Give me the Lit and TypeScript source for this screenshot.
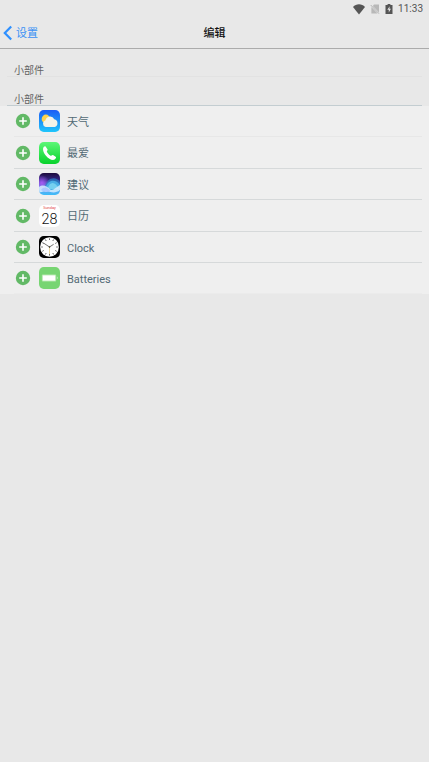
import { LitElement, html, css, svg, TemplateResult } from "lit";
import { customElement } from "lit/decorators.js";

interface Widget {
  name: string;
  icon: TemplateResult;
}

const ticks = Array.from({ length: 12 }, (_, i) => i * 30);

const weather = html`<svg class="art" viewBox="0 0 22 22" preserveAspectRatio="none" aria-hidden="true">
  <defs><linearGradient id="sky" x1="0" y1="0" x2="0" y2="1">
    <stop offset="0" stop-color="#1b5cf5" /><stop offset="1" stop-color="#1fc6fb" />
  </linearGradient></defs>
  <rect width="22" height="22" rx="5" fill="url(#sky)" />
  <circle cx="7.2" cy="9" r="4.4" fill="#ffd34d" />
  <path d="M7 17a3.5 3.5 0 0 1-.2-6.8 4.9 4.9 0 0 1 9.2-1 4 4 0 0 1 .4 7.8z" fill="#f4f3e8" />
</svg>`;

const phone = html`<svg class="art" viewBox="0 0 22 22" preserveAspectRatio="none" aria-hidden="true">
  <defs><linearGradient id="call" x1="0" y1="0" x2="0" y2="1">
    <stop offset="0" stop-color="#5cf777" /><stop offset="1" stop-color="#08d22c" />
  </linearGradient></defs>
  <rect width="22" height="22" rx="5" fill="url(#call)" />
  <path d="M4.3 6.2C4.7 4.7 6 3.9 6.9 4.4L9 7.6C9.2 8.2 8.7 8.6 8.2 9.2C8.2 10.6 11.3 13.8 12.8 13.8C13.5 13.2 14 12.7 14.7 13L17.8 15.1C18.2 16 17 17.4 15.8 17.8C10.8 18.9 3.3 11.2 4.3 6.2Z" fill="#fff" />
</svg>`;

const suggestions = html`<svg class="art" viewBox="0 0 22 22" preserveAspectRatio="none" aria-hidden="true">
  <defs>
    <linearGradient id="dusk" x1="0" y1="0" x2="0" y2="1">
      <stop offset="0" stop-color="#1d0b3c" /><stop offset=".35" stop-color="#35298c" />
      <stop offset=".65" stop-color="#6a9cf0" /><stop offset="1" stop-color="#3dbdf8" />
    </linearGradient>
    <radialGradient id="glow"><stop offset="0" stop-color="#a65cf5" /><stop offset="1" stop-color="#a65cf5" stop-opacity="0" /></radialGradient>
    <clipPath id="tile"><rect width="22" height="22" rx="5" /></clipPath>
  </defs>
  <g clip-path="url(#tile)">
    <rect width="22" height="22" fill="url(#dusk)" />
    <circle cx="3" cy="10" r="8" fill="url(#glow)" />
    <path d="M6 15C8 4 18 3 22 9V17H6z" fill="#2a86c8" opacity=".7" />
    <path d="M7 15C9 6 18 6 22 12V18H7z" fill="#4db4e8" opacity=".9" />
    <path d="M9 16C11 8 17 8 21 16z" fill="#7fd8f2" opacity=".8" />
    <path d="M0 14C4 11 8 13 11 16S18 14 22 12V17C17 21 12 19 9 18S3 20 0 19z" fill="#d6edff" opacity=".85" />
    <path d="M2 17C5 13 9 14 12 18C8 20 5 19 2 17z" fill="#a8c8ff" />
  </g>
</svg>`;

const calendar = html`<svg class="art" viewBox="0 0 22 22" preserveAspectRatio="none" aria-hidden="true">
  <rect width="22" height="22" rx="5" fill="#fff" />
  <text class="weekday" x="11" y="4" text-anchor="middle">Sunday</text>
  <text class="day" x="11" y="19" text-anchor="middle">28</text>
</svg>`;

const clock = html`<svg class="art" viewBox="0 0 22 22" preserveAspectRatio="none" aria-hidden="true">
  <rect width="22" height="22" rx="5" fill="#000" />
  <circle cx="11" cy="11" r="9.8" fill="#fff" />
  ${ticks.map((a) => svg`<path d="M11 2.4v1.5" transform="rotate(${a} 11 11)" stroke="#444" stroke-width=".9" />`)}
  <path d="M11 11L5 7.2M11 11L15 8.5" stroke="#333" stroke-width=".7" stroke-linecap="round" />
  <path d="M11 10v8" stroke="#d9b95c" stroke-width=".6" />
  <circle cx="11" cy="11" r=".8" fill="#333" />
</svg>`;

const battery = html`<svg class="art" viewBox="0 0 22 22" preserveAspectRatio="none" aria-hidden="true">
  <rect width="22" height="22" rx="5" fill="#77d572" />
  <rect x="3" y="7.4" width="15" height="7.2" rx="1" fill="#b5e8ae" />
  <rect x="4" y="8.4" width="13" height="5.2" fill="#fff" />
  <path d="M18.7 9.6c1.2.4 1.2 2.4 0 2.8z" fill="#c9efc4" />
</svg>`;

const widgets: Widget[] = [
  { name: "天气", icon: weather },
  { name: "最爱", icon: phone },
  { name: "建议", icon: suggestions },
  { name: "日历", icon: calendar },
  { name: "Clock", icon: clock },
  { name: "Batteries", icon: battery },
];

@customElement("app-root")
export class AppRoot extends LitElement {
  static styles = css`
    :host {
      display: block;
      min-height: 100vh;
      background: #e8e8e8;
      color: #636363;
      font-family: Roboto, "Noto Sans CJK SC", sans-serif;
    }
    .status {
      display: flex;
      align-items: center;
      justify-content: flex-end;
      height: 17px;
      padding: 0 6px 0 0;
      font-size: 10px;
      line-height: 17px;
      color: #555;
    }
    .status svg { display: block; height: 12px; }
    .wifi { width: 14px; margin-right: 4px; }
    .sim { width: 10px; margin-right: 4px; }
    .cell { width: 10px; margin-right: 4px; }
    .nav {
      box-sizing: border-box;
      display: grid;
      grid-template-columns: 1fr auto 1fr;
      align-items: center;
      height: 32px;
      border-bottom: 1px solid #ababab;
    }
    .back {
      display: flex;
      align-items: center;
      justify-self: start;
      gap: 3px;
      padding: 0 0 0 3px;
      border: 0;
      background: none;
      color: #3a91f5;
      font: inherit;
      font-size: 11px;
      line-height: 16px;
    }
    .back svg { display: block; width: 10px; height: 16px; }
    .back span, h1 { padding-top: 2px; }
    h1 {
      margin: 0;
      font-size: 11px;
      font-weight: 500;
      line-height: 16px;
      color: #111;
    }
    h2 {
      margin: 0 7px;
      padding: 0 7px;
      font-size: 10px;
      font-weight: 400;
      line-height: 12px;
      border-bottom: 1px solid #e2e2e2;
    }
    .current { padding-top: 16px; line-height: 11px; }
    .more { padding-top: 17px; line-height: 11px; border-color: #c3cdd1; }
    ul {
      margin: 0;
      padding: 0 7px 0 14px;
      list-style: none;
      background: #efefef;
    }
    li {
      box-sizing: border-box;
      display: flex;
      align-items: center;
      height: 31px;
      border-bottom: 1px solid #d6d9da;
    }
    li:nth-child(even) { height: 32px; }
    li:first-child { border-color: #e7e7e7; }
    li:last-child { height: 31px; border-color: #ebebeb; }
    .add {
      display: block;
      margin: 0 8px 0 1px;
      padding: 0;
      border: 0;
      background: none;
    }
    .add svg { display: block; width: 16px; height: 16px; }
    .art { display: block; width: 21px; height: 22px; margin-right: 7px; }
    .name { padding-top: 3px; font-size: 11px; line-height: 16px; color: #526a75; }
    .weekday { font-size: 4px; fill: #e33b3b; }
    .day { font-size: 15px; font-weight: 300; fill: #111; }
  `;

  render() {
    return html`
      <div class="status">
        <svg class="wifi" viewBox="0 0 14 12" aria-hidden="true"><path d="M1 4C4 .4 10 .4 13 4L7 11.4z" fill="#555" /></svg>
        <svg class="sim" viewBox="0 0 10 12" aria-hidden="true">
          <path d="M4 1.5H9V9.4L2.8 2.9z" fill="#b8b8b8" /><path d="M1.4 4L7.6 10.5H1.4z" fill="#b8b8b8" /><path d="M.7 2L9 10.7" stroke="#aaa" stroke-width=".9" />
        </svg>
        <svg class="cell" viewBox="0 0 10 12" aria-hidden="true">
          <path d="M1.5 2H3.6V1H6.4V2H8.5V11H1.5z" fill="#555" /><path d="M5.7 3.2L3.3 6.8H4.8V9.4L6.9 5.8H5.4z" fill="#e8e8e8" />
        </svg>
        <time>11:33</time>
      </div>
      <header class="nav">
        <button class="back">
          <svg viewBox="0 0 10 16" aria-hidden="true"><path d="M8.2 1.5L1.8 8L8.2 14.5" fill="none" stroke="#2e90ff" stroke-width="2.2" /></svg>
          <span>设置</span>
        </button>
        <h1>编辑</h1>
      </header>
      <main>
        <h2 class="current">小部件</h2>
        <h2 class="more">小部件</h2>
        <ul>
          ${widgets.map(
            (w) => html`<li>
              <button class="add" aria-label="添加 ${w.name}">
                <svg viewBox="0 0 16 16" aria-hidden="true"><circle cx="8" cy="8" r="7.2" fill="#62b966" /><path d="M8 4.2V11.8M4.2 8H11.8" stroke="#fff" stroke-width="1.6" /></svg>
              </button>
              ${w.icon}
              <span class="name">${w.name}</span>
            </li>`
          )}
        </ul>
      </main>
    `;
  }
}
